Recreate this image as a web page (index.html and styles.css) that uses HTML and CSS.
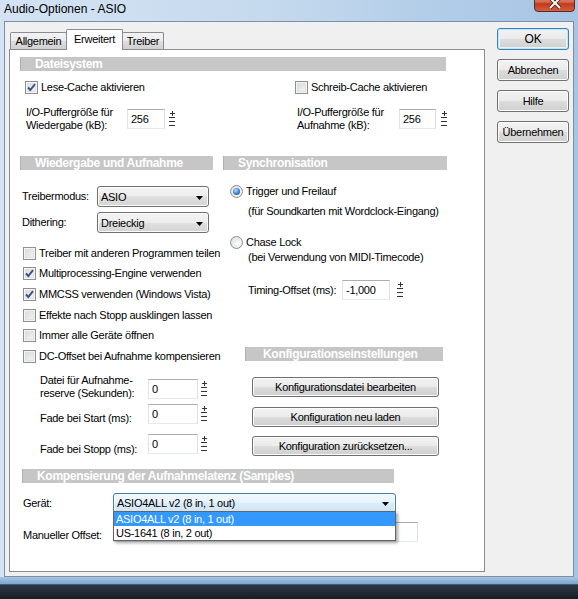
FILE: index.html
```html
<!DOCTYPE html>
<html>
<head>
<meta charset="utf-8">
<title>Audio-Optionen - ASIO</title>
<link rel="stylesheet" href="styles.css">
</head>
<body>
<div class="window">
  <div class="titlebar">
    <span class="title">Audio-Optionen - ASIO</span>
    <span class="close"><svg width="14" height="12" viewBox="0 0 14 12"><path d="M2 1L12 11M12 1L2 11" stroke="#4a1a12" stroke-width="3.5"/><path d="M2 1L12 11M12 1L2 11" stroke="#fff" stroke-width="2"/></svg></span>
  </div>
  <div class="client">
    <div class="tabarea">
      <div class="tabs">
        <div class="tab t1">Allgemein</div>
        <div class="tab t2 active">Erweitert</div>
        <div class="tab t3">Treiber</div>
      </div>
      <div class="panel">
        <div class="bar bar-fs">Dateisystem</div>
        <div class="fs">
          <div class="chkrow"><span class="cb on"><svg width="11" height="11" viewBox="0 0 11 11"><path d="M2 5.5L4.3 8L9 2.2" stroke="#3b4f86" stroke-width="1.9" fill="none"/></svg></span><span class="ctext">Lese-Cache aktivieren</span></div>
          <div class="chkrow"><span class="cb"></span><span class="ctext">Schreib-Cache aktivieren</span></div>
          <div class="buf buf-l"><span class="lbl2">I/O-Puffergröße für<br>Wiedergabe (kB):</span><span class="inp w38">256</span><svg class="spin" width="8" height="18" viewBox="0 0 8 18"><path d="M4 1v5M1.5 3.5h5M1 7.5h6M1 11.5h6M1 15.5h6" stroke="#333" stroke-width="1" fill="none" shape-rendering="crispEdges"/></svg></div>
          <div class="buf buf-r"><span class="lbl2">I/O-Puffergröße für<br>Aufnahme (kB):</span><span class="inp w37">256</span><svg class="spin" width="8" height="18" viewBox="0 0 8 18"><path d="M4 1v5M1.5 3.5h5M1 7.5h6M1 11.5h6M1 15.5h6" stroke="#333" stroke-width="1" fill="none" shape-rendering="crispEdges"/></svg></div>
        </div>

        <div class="mid">
          <div class="col-l">
            <div class="bar bar-wa">Wiedergabe und Aufnahme</div>
            <div class="selrow first"><span class="slbl">Treibermodus:</span><span class="sel w112"><span>ASIO</span><svg width="7" height="4" viewBox="0 0 7 4"><path d="M0 0h7L3.5 4z" fill="#000"/></svg></span></div>
            <div class="selrow"><span class="slbl">Dithering:</span><span class="sel w112"><span>Dreieckig</span><svg width="7" height="4" viewBox="0 0 7 4"><path d="M0 0h7L3.5 4z" fill="#000"/></svg></span></div>
            <div class="checklist">
              <div class="chkrow"><span class="cb"></span><span class="ctext">Treiber mit anderen Programmen teilen</span></div>
              <div class="chkrow"><span class="cb on"><svg width="11" height="11" viewBox="0 0 11 11"><path d="M2 5.5L4.3 8L9 2.2" stroke="#3b4f86" stroke-width="1.9" fill="none"/></svg></span><span class="ctext">Multiprocessing-Engine verwenden</span></div>
              <div class="chkrow"><span class="cb on"><svg width="11" height="11" viewBox="0 0 11 11"><path d="M2 5.5L4.3 8L9 2.2" stroke="#3b4f86" stroke-width="1.9" fill="none"/></svg></span><span class="ctext">MMCSS verwenden (Windows Vista)</span></div>
              <div class="chkrow"><span class="cb"></span><span class="ctext">Effekte nach Stopp ausklingen lassen</span></div>
              <div class="chkrow"><span class="cb"></span><span class="ctext">Immer alle Geräte öffnen</span></div>
              <div class="chkrow"><span class="cb"></span><span class="ctext">DC-Offset bei Aufnahme kompensieren</span></div>
            </div>
            <div class="numrow datei"><span class="nlbl">Datei für Aufnahme-<br>reserve (Sekunden):</span><span class="inp w50">0</span><svg class="spin" width="8" height="18" viewBox="0 0 8 18"><path d="M4 1v5M1.5 3.5h5M1 7.5h6M1 11.5h6M1 15.5h6" stroke="#333" stroke-width="1" fill="none" shape-rendering="crispEdges"/></svg></div>
            <div class="numrow fade f1"><span class="nlbl">Fade bei Start (ms):</span><span class="inp w50">0</span><svg class="spin" width="8" height="18" viewBox="0 0 8 18"><path d="M4 1v5M1.5 3.5h5M1 7.5h6M1 11.5h6M1 15.5h6" stroke="#333" stroke-width="1" fill="none" shape-rendering="crispEdges"/></svg></div>
            <div class="numrow fade f2"><span class="nlbl">Fade bei Stopp (ms):</span><span class="inp w50">0</span><svg class="spin" width="8" height="18" viewBox="0 0 8 18"><path d="M4 1v5M1.5 3.5h5M1 7.5h6M1 11.5h6M1 15.5h6" stroke="#333" stroke-width="1" fill="none" shape-rendering="crispEdges"/></svg></div>
          </div>

          <div class="col-r">
            <div class="bar bar-sync">Synchronisation</div>
            <div class="radrow r1"><span class="rb on"></span><span class="ctext">Trigger und Freilauf</span></div>
            <div class="sub s1">(für Soundkarten mit Wordclock-Eingang)</div>
            <div class="radrow r2"><span class="rb"></span><span class="ctext">Chase Lock</span></div>
            <div class="sub s2">(bei Verwendung von MIDI-Timecode)</div>
            <div class="timing"><span class="tlbl">Timing-Offset (ms):</span><span class="inp w48">-1,000</span><svg class="spin" width="8" height="18" viewBox="0 0 8 18"><path d="M4 1v5M1.5 3.5h5M1 7.5h6M1 11.5h6M1 15.5h6" stroke="#333" stroke-width="1" fill="none" shape-rendering="crispEdges"/></svg></div>
            <div class="bar bar-konf">Konfigurationseinstellungen</div>
            <div class="kbtn k1">Konfigurationsdatei bearbeiten</div>
            <div class="kbtn k2">Konfiguration neu laden</div>
            <div class="kbtn k3">Konfiguration zurücksetzen...</div>
          </div>
        </div>

        <div class="bar bar-komp">Kompensierung der Aufnahmelatenz (Samples)</div>
        <div class="frow geraet"><span class="flbl">Gerät:</span><span class="sel focus w283"><span>ASIO4ALL v2 (8 in, 1 out)</span><svg width="7" height="4" viewBox="0 0 7 4"><path d="M0 0h7L3.5 4z" fill="#000"/></svg></span></div>
        <div class="frow offset"><span class="flbl">Manueller Offset:</span><span class="inp w305"></span></div>

        <div class="droplist">
          <div class="ditem hl">ASIO4ALL v2 (8 in, 1 out)</div>
          <div class="ditem">US-1641 (8 in, 2 out)</div>
        </div>
      </div>
    </div>
    <div class="buttons">
      <div class="btn default">OK</div>
      <div class="btn">Abbrechen</div>
      <div class="btn">Hilfe</div>
      <div class="btn">Übernehmen</div>
    </div>
  </div>
  <div class="bottomframe"></div>
</div>
<div class="desk"></div>
</body>
</html>
```

FILE: styles.css
```css
* { box-sizing: border-box; }
html, body { margin: 0; padding: 0; }
body {
  width: 578px;
  height: 599px;
  overflow: hidden;
  background: #1b222c;
  font-family: "Liberation Sans", Arial, sans-serif;
  font-size: 11px;
  letter-spacing: -0.28px;
  color: #000;
}

/* window frame */
.window {
  height: 585px;
  display: flex;
  flex-direction: column;
  background: linear-gradient(to right, #d3e3f3 0%, #c6daee 45%, #b2cde8 75%, #a6c4e4 100%);
}
.titlebar {
  height: 21px;
  flex: none;
  display: flex;
  justify-content: space-between;
  overflow: hidden;
}
.title {
  font-size: 12px;
  letter-spacing: 0;
  line-height: 14px;
  padding: 2px 0 0 4px;
  color: #000;
}
.close {
  width: 41px;
  height: 20px;
  margin: -8px 3px 0 0;
  border: 1px solid #5a2a24;
  border-radius: 0 0 4px 4px;
  background: linear-gradient(#e8a493, #d56a4c 50%, #c2391f 60%, #d0603d);
  display: flex;
  align-items: center;
  justify-content: center;
}
.close svg { margin-top: 2px; }

.client {
  flex: none;
  height: 556px;
  margin: 0 4px;
  background: #f0f0f0;
  border: 1px solid #7d8fa6;
  display: flex;
  align-items: flex-start;
}
.bottomframe {
  flex: none;
  height: 8px;
  background: linear-gradient(#a9c5e2, #7fa3c8);
  border-bottom: 1px solid #3a5a7e;
}
.desk {
  height: 14px;
  background: linear-gradient(#2c3846, #161c24);
}

/* tabs */
.tabarea {
  width: 476px;
  margin: 6px 0 0 4px;
}
.tabs {
  height: 21px;
  display: flex;
  align-items: flex-end;
  padding-left: 1px;
  position: relative;
  z-index: 1;
}
.tab {
  height: 17px;
  border: 1px solid #898c95;
  border-bottom: none;
  border-radius: 2px 2px 0 0;
  background: linear-gradient(#f3f3f3, #ebebeb 50%, #dedede 50%, #d0d0d0);
  text-align: center;
  line-height: 16px;
  margin-right: -1px;
}
.t1 { width: 57px; }
.t2 { width: 57px; }
.t3 { width: 42px; }
.tab.active {
  height: 21px;
  margin-bottom: -1px;
  background: #fff;
  line-height: 18px;
  position: relative;
  z-index: 2;
}

.panel {
  width: 476px;
  height: 523px;
  border: 1px solid #898c95;
  background: #fff;
  position: relative;
}

/* section bars */
.bar {
  height: 14px;
  line-height: 14px;
  background: #c6c6c6;
  border-left: 1px solid #b0b0b0;
  color: #fff;
  font-weight: bold;
  font-size: 12px;
  letter-spacing: -0.3px;
  padding-left: 14px;
  white-space: nowrap;
  overflow: hidden;
}
.bar-fs { margin: 7px 0 0 10px; width: 426px; }
.bar-wa { width: 193px; }
.bar-sync { width: 224px; }
.bar-konf { width: 198px; margin: 47px 0 0 22px; padding-left: 17px; }
.bar-komp { width: 372px; margin: 13px 0 0 12px; }

/* checkboxes and radios */
.chkrow, .radrow {
  display: flex;
  align-items: center;
  white-space: nowrap;
}
.cb {
  width: 13px;
  height: 13px;
  flex: none;
  border: 1px solid #8e8f8f;
  background: linear-gradient(135deg, #d4d6d9, #f8f8f8);
  box-shadow: inset 0 0 0 1px #f4f4f4, inset 0 0 0 2px #e0e1e3;
  display: flex;
  align-items: center;
  justify-content: center;
}
.ctext { margin-left: 3px; line-height: 13px; }
.rb {
  width: 13px;
  height: 13px;
  flex: none;
  border-radius: 50%;
  border: 1px solid #8e8f8f;
  background: radial-gradient(circle at 60% 60%, #fdfdfd, #d6d8db);
  position: relative;
}
.rb.on::after {
  content: "";
  position: absolute;
  left: 2px;
  top: 2px;
  width: 7px;
  height: 7px;
  border-radius: 50%;
  background: radial-gradient(circle at 40% 35%, #b7e0fb, #3b7cc9 55%, #1d4c8c);
}

/* inputs */
.inp {
  height: 20px;
  flex: none;
  border: 1px solid;
  border-color: #abadb3 #dbdfe6 #e3e9ef #e2e3ea;
  background: #fff;
  padding-left: 3px;
  line-height: 18px;
}
.w37 { width: 37px; }
.w38 { width: 38px; }
.w48 { width: 48px; }
.w50 { width: 50px; }
.w305 { width: 305px; }
.spin { flex: none; display: block; }

/* Dateisystem */
.fs {
  display: grid;
  grid-template-columns: 270px 1fr;
  row-gap: 12px;
  margin: 10px 0 0 15px;
}
.buf {
  height: 26px;
  display: flex;
  align-items: center;
}
.lbl2 { line-height: 13px; white-space: nowrap; }
.buf-l .lbl2 { width: 102px; padding-left: 1px; }
.buf-r .lbl2 { width: 104px; padding-left: 2px; }
.buf-l .spin { margin-left: 3px; }
.buf-r .spin { margin-left: 4px; }

/* middle */
.mid {
  display: grid;
  grid-template-columns: 203px 224px;
  margin: 24px 0 0 10px;
}
.col-l, .col-r { display: flex; flex-direction: column; }

.selrow {
  height: 21px;
  display: flex;
  align-items: center;
  margin-top: 5px;
  padding-left: 2px;
}
.selrow.first { margin-top: 16px; }
.slbl { width: 75px; line-height: 13px; }
.sel {
  height: 21px;
  border: 1px solid #707070;
  border-radius: 3px;
  background: linear-gradient(#f4f4f4, #ededed 50%, #e0e0e0 50%, #d4d4d4);
  box-shadow: inset 0 0 0 1px #fbfbfb;
  display: flex;
  align-items: center;
  justify-content: space-between;
  padding: 1px 5px 0 3px;
  line-height: 13px;
}
.sel svg { flex: none; margin-top: 1px; }
.w112 { width: 112px; }
.w283 { width: 283px; height: 20px; }
.sel.focus {
  border-color: #3c7fb1;
  background: linear-gradient(#f1f8fd, #e6f2fb 50%, #d9ecf9 50%, #d0e6f6);
  box-shadow: inset 0 0 0 1px #f6fbfe;
  padding-right: 6px;
}

.checklist { margin-top: 10px; padding-left: 3px; }
.checklist .chkrow { height: 20.6px; }

.numrow {
  display: flex;
  align-items: flex-start;
}
.nlbl { width: 128px; padding-left: 20px; line-height: 13px; white-space: nowrap; }
.numrow .spin { margin-left: 2px; margin-top: 1px; }
.datei { margin-top: 7.4px; }
.datei .inp { margin-top: 5px; }
.datei .spin { margin-top: 6px; }
.fade .nlbl { padding-top: 8.5px; }
.f1 { margin-top: 4px; }
.f2 { margin-top: 9px; }

/* right column */
.r1 { margin-top: 15px; padding-left: 7px; }
.r2 { margin-top: 18.5px; padding-left: 7px; }
.sub { padding-left: 25px; line-height: 13px; white-space: nowrap; }
.s1 { margin-top: 6.5px; }
.s2 { margin-top: 1.5px; }
.timing {
  display: flex;
  align-items: center;
  height: 20px;
  margin-top: 16.5px;
}
.tlbl { width: 119px; padding-left: 25px; line-height: 13px; }
.timing .spin { margin-left: 6px; }

.kbtn {
  width: 187px;
  height: 20px;
  margin-left: 29px;
  border: 1px solid #707070;
  border-radius: 3px;
  background: linear-gradient(#f2f2f2, #ebebeb 50%, #dddddd 50%, #cfcfcf);
  box-shadow: inset 0 0 0 1px #fcfcfc;
  text-align: center;
  line-height: 18px;
}
.k1 { margin-top: 16px; }
.k2 { margin-top: 10px; }
.k3 { margin-top: 9px; }

/* bottom rows */
.frow {
  display: flex;
  align-items: center;
  margin-left: 13px;
  height: 20px;
}
.flbl { width: 90px; line-height: 13px; }
.geraet { margin-top: 10px; }
.offset { margin-top: 9px; align-items: flex-start; }
.offset .flbl { padding-top: 6.5px; }

.droplist {
  position: absolute;
  left: 103px;
  top: 461px;
  width: 283px;
  border: 1px solid #646464;
  background: #fff;
  box-shadow: 2px 2px 3px rgba(0, 0, 0, 0.35);
}
.ditem {
  height: 14px;
  line-height: 14px;
  padding-left: 2px;
  white-space: nowrap;
}
.ditem.hl { background: #3399ff; color: #fff; }

/* dialog buttons */
.buttons {
  display: flex;
  flex-direction: column;
  gap: 9px;
  margin: 6px 0 0 12px;
}
.btn {
  width: 72px;
  height: 22px;
  border: 1px solid #707070;
  border-radius: 3px;
  background: linear-gradient(#f2f2f2, #ebebeb 50%, #dddddd 50%, #cfcfcf);
  box-shadow: inset 0 0 0 1px #fcfcfc;
  text-align: center;
  line-height: 20px;
}
.btn.default {
  border-color: #3c7fb1;
  box-shadow: inset 0 0 0 1px #bfe6f8, inset 0 0 0 2px #e3f4fc;
  font-size: 12px;
}
```
